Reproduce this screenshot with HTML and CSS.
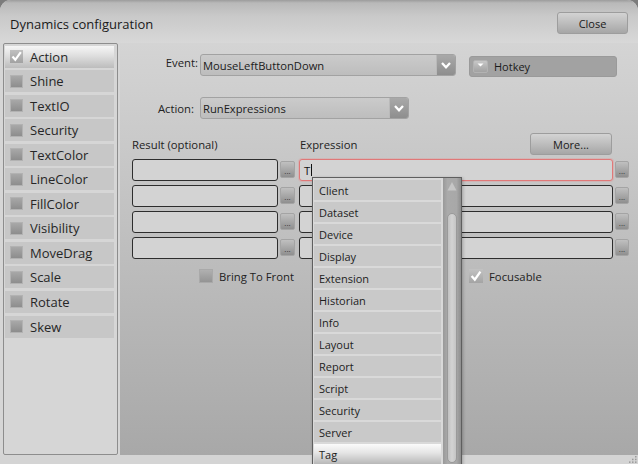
FILE: index.html
```html
<!DOCTYPE html>
<html lang="en">
<head>
<meta charset="utf-8">
<title>Dynamics configuration</title>
<link rel="stylesheet" href="styles.css">
</head>
<body>
<div class="window">
  <header class="titlebar">
    <span class="title">Dynamics configuration</span>
    <button class="btn close-btn">Close</button>
  </header>

  <div class="content">
    <nav class="sidebar">
      <div class="side-item selected"><span class="cb checked"><svg viewBox="0 0 13 13" width="13" height="13"><polyline points="2.5,6.5 5.3,9.8 10.8,2.2" fill="none" stroke="#fff" stroke-width="2.2"/></svg></span>Action</div>
      <div class="side-item"><span class="cb"></span>Shine</div>
      <div class="side-item"><span class="cb"></span>TextIO</div>
      <div class="side-item"><span class="cb"></span>Security</div>
      <div class="side-item"><span class="cb"></span>TextColor</div>
      <div class="side-item"><span class="cb"></span>LineColor</div>
      <div class="side-item"><span class="cb"></span>FillColor</div>
      <div class="side-item"><span class="cb"></span>Visibility</div>
      <div class="side-item"><span class="cb"></span>MoveDrag</div>
      <div class="side-item"><span class="cb"></span>Scale</div>
      <div class="side-item"><span class="cb"></span>Rotate</div>
      <div class="side-item"><span class="cb"></span>Skew</div>
    </nav>

    <main class="main">
      <div class="field-row">
        <label class="field-label event-label">Event:</label>
        <div class="combo event-combo">
          <span class="combo-text">MouseLeftButtonDown</span>
          <span class="combo-btn"><svg viewBox="0 0 10 7" width="10" height="7"><path d="M1 1 L5 5.3 L9 1" fill="none" stroke="#fff" stroke-width="2.3"/></svg></span>
        </div>
        <div class="hotkey">
          <span class="hotkey-icon"><svg viewBox="0 0 13 11" width="13" height="11"><polygon points="3.5,2.5 9.5,2.5 6.5,5.5" fill="#fff"/></svg></span>
          <span>Hotkey</span>
        </div>
      </div>

      <div class="field-row action-row">
        <label class="field-label action-label">Action:</label>
        <div class="combo action-combo">
          <span class="combo-text">RunExpressions</span>
          <span class="combo-btn"><svg viewBox="0 0 10 7" width="10" height="7"><path d="M1 1 L5 5.3 L9 1" fill="none" stroke="#fff" stroke-width="2.3"/></svg></span>
        </div>
      </div>

      <div class="labels-row">
        <span class="col-result">Result (optional)</span>
        <span class="col-expr">Expression</span>
        <button class="btn more-btn">More...</button>
      </div>

      <div class="boxes">
        <div class="box-row">
          <div class="tb result"></div>
          <button class="dots">...</button>
          <div class="tb expr focused">T<span class="caret"></span>
            <div class="popup">
              <div class="popup-list">
                <div class="popup-item">Client</div>
                <div class="popup-item">Dataset</div>
                <div class="popup-item">Device</div>
                <div class="popup-item">Display</div>
                <div class="popup-item">Extension</div>
                <div class="popup-item">Historian</div>
                <div class="popup-item">Info</div>
                <div class="popup-item">Layout</div>
                <div class="popup-item">Report</div>
                <div class="popup-item">Script</div>
                <div class="popup-item">Security</div>
                <div class="popup-item">Server</div>
                <div class="popup-item active">Tag</div>
              </div>
              <div class="scrollbar">
                <svg class="scroll-up" viewBox="0 0 10 10" width="10" height="10"><polygon points="5,1 9.5,9.5 0.5,9.5" fill="#c6c6c6"/></svg>
                <div class="thumb"></div>
              </div>
            </div>
          </div>
          <button class="dots narrow">...</button>
        </div>
        <div class="box-row">
          <div class="tb result"></div>
          <button class="dots">...</button>
          <div class="tb expr"></div>
          <button class="dots narrow">...</button>
        </div>
        <div class="box-row">
          <div class="tb result"></div>
          <button class="dots">...</button>
          <div class="tb expr"></div>
          <button class="dots narrow">...</button>
        </div>
        <div class="box-row">
          <div class="tb result"></div>
          <button class="dots">...</button>
          <div class="tb expr"></div>
          <button class="dots narrow">...</button>
        </div>
      </div>

      <div class="checks-row">
        <label class="check-item front"><span class="mcb"></span>Bring To Front</label>
        <label class="check-item"><span class="mcb checked"><svg viewBox="0 0 14 14" width="14" height="14"><polyline points="2.6,7 5.8,10.6 11.4,2.6" fill="none" stroke="#fff" stroke-width="2.3"/></svg></span>Focusable</label>
      </div>
    </main>
  </div>

  <footer class="statusbar">
    <svg class="grip" viewBox="0 0 9 7" width="9" height="7">
      <rect x="7" y="0" width="1.5" height="1.5" fill="#9a9a9a"/>
      <rect x="4" y="2.7" width="1.5" height="1.5" fill="#9a9a9a"/>
      <rect x="7" y="2.7" width="1.5" height="1.5" fill="#9a9a9a"/>
      <rect x="1" y="5.4" width="1.5" height="1.5" fill="#9a9a9a"/>
      <rect x="4" y="5.4" width="1.5" height="1.5" fill="#9a9a9a"/>
      <rect x="7" y="5.4" width="1.5" height="1.5" fill="#9a9a9a"/>
    </svg>
  </footer>
</div>
</body>
</html>
```

FILE: styles.css
```css
* { box-sizing: border-box; }

html, body {
  margin: 0;
  padding: 0;
}

body {
  width: 638px;
  height: 464px;
  overflow: hidden;
  background: #7c7c7c;
  font-family: "Open Sans", "Noto Sans", sans-serif;
  color: #1e1e1e;
}

.window {
  width: 638px;
  height: 464px;
  display: flex;
  flex-direction: column;
  border-radius: 11px 11px 0 0;
  overflow: hidden;
  background: #d6d6d6;
}

/* ---------- title bar ---------- */
.titlebar {
  height: 43px;
  flex: none;
  display: flex;
  align-items: center;
  justify-content: space-between;
  padding: 3px 10px 0 10px;
  background: linear-gradient(#9c9c9c 0px, #b9b9b9 3px, #c9c9c9 16px, #d8d8d8 43px);
}

.title {
  font-size: 13px;
  color: #1a1a1a;
  margin-top: 2px;
}

.btn {
  font-family: inherit;
  font-size: 11px;
  color: #1a1a1a;
  background: linear-gradient(#d3d3d3, #bdbdbd 50%, #a6a6a6);
  border: 1px solid #9d9d9d;
  border-radius: 3px;
  padding: 0;
  display: flex;
  align-items: center;
  justify-content: center;
}

.close-btn {
  width: 71px;
  height: 22px;
}

/* ---------- body ---------- */
.content {
  flex: 1;
  display: flex;
  min-height: 0;
}

.sidebar {
  width: 115px;
  flex: none;
  margin-left: 3px;
  margin-right: 2px;
  border: 1px solid #8d8d8d;
  border-radius: 2px;
  background: #d6d6d6;
  padding: 1.5px 3px 0 1px;
  display: flex;
  flex-direction: column;
  gap: 2.55px;
}

.side-item {
  height: 22px;
  flex: none;
  display: flex;
  align-items: center;
  gap: 7px;
  padding-left: 5px;
  background: #c7c7c7;
  font-size: 13px;
  color: #262626;
}

.side-item.selected {
  background: linear-gradient(#f6f6f6, #dedede 45%, #bcbcbc);
}

.cb {
  width: 13px;
  height: 13px;
  flex: none;
  background: linear-gradient(#a8a8a8, #8d8d8d);
  border: 1px solid #b2b2b2;
  display: flex;
}

.cb.checked {
  background: linear-gradient(#c0c0c0, #a2a2a2);
  border: none;
}

/* ---------- main panel ---------- */
.main {
  flex: 1;
  min-width: 0;
  position: relative;
  display: flex;
  flex-direction: column;
  padding: 11px 9px 0 12px;
  background: linear-gradient(#d4d4d4, #a8a8a8);
  font-size: 11.3px;
  color: #222;
}

.field-row {
  display: flex;
  align-items: center;
  height: 22px;
}

.action-row {
  margin-top: 21px;
}

.field-label {
  text-align: right;
  flex: none;
}

.event-label {
  width: 66px;
  margin-right: 2px;
  margin-bottom: 5px;
}

.action-label {
  width: 62px;
  margin-right: 6px;
}

.combo {
  height: 22px;
  display: flex;
  align-items: center;
  border: 1px solid #a2a2a2;
  border-radius: 3px;
  background: linear-gradient(#cbcbcb, #bdbdbd);
  padding-left: 2px;
  font-size: 11.2px;
  color: #1b1b1b;
}

.event-combo { width: 256px; }
.action-combo { width: 209px; }

.combo-text {
  flex: 1;
}

.combo-btn {
  width: 19px;
  height: 20px;
  display: flex;
  align-items: center;
  justify-content: center;
  background: linear-gradient(#a9a9a9, #8e8e8e);
  border-left: 1px solid #b9b9b9;
  border-radius: 0 2px 2px 0;
}

.hotkey {
  width: 148px;
  height: 21px;
  margin-left: 13px;
  align-self: flex-start;
  margin-top: 2px;
  display: flex;
  align-items: center;
  gap: 6px;
  padding-left: 3px;
  background: #a2a2a2;
  border: 1px solid #9a9a9a;
  border-radius: 3px;
  font-size: 11px;
  color: #1a1a1a;
}

.hotkey-icon {
  width: 15px;
  height: 13px;
  display: flex;
  align-items: flex-start;
  justify-content: center;
  background: linear-gradient(#c7c7c7, #a2a2a2);
  border: 1px solid #b3b3b3;
  border-radius: 2px;
}

.labels-row {
  display: flex;
  align-items: center;
  height: 22px;
  margin-top: 14px;
}

.col-result {
  width: 168px;
  flex: none;
}

.col-expr {
  flex: 1;
}

.more-btn {
  width: 82px;
  height: 22px;
  flex: none;
  margin-right: 17px;
}

.boxes {
  margin-top: 4px;
  display: flex;
  flex-direction: column;
  gap: 4px;
}

.box-row {
  display: flex;
  align-items: center;
  height: 22px;
}

.tb {
  height: 22px;
  flex: none;
  border: 1px solid #2d2d2d;
  border-radius: 3px;
  background: #d3d3d3;
}

.tb.result { width: 146px; }

.tb.expr {
  width: 314px;
  margin-left: 4px;
  position: relative;
  display: flex;
  align-items: center;
  padding-left: 4px;
  color: #111;
}

.tb.focused {
  border-color: #e07878;
  box-shadow: 0 0 0 1px rgba(230, 150, 150, 0.35);
}

.caret {
  display: inline-block;
  width: 1px;
  height: 12px;
  margin-left: 1px;
  background: #111;
}

.dots {
  width: 15px;
  height: 17px;
  flex: none;
  margin-left: 2px;
  margin-bottom: 1px;
  padding: 0 0 2px 0;
  border: 1px solid #a4a4a4;
  border-radius: 2px;
  background: linear-gradient(#c0c0c0, #8f8f8f);
  font-family: inherit;
  font-size: 8px;
  line-height: 1;
  color: #333;
  display: flex;
  align-items: flex-end;
  justify-content: center;
}

.dots.narrow { width: 14px; }

/* ---------- autocomplete popup ---------- */
.popup {
  position: absolute;
  left: 12px;
  top: 17px;
  width: 150px;
  height: 300px;
  z-index: 5;
  display: flex;
  border: 1px solid #5f5f5f;
  background: #d9d9d9;
  box-shadow: 1px 1px 3px rgba(0, 0, 0, 0.25);
}

.popup-list {
  width: 128px;
  padding: 2px 0 0 1px;
  margin-right: 2px;
  display: flex;
  flex-direction: column;
  gap: 2px;
}

.popup-item {
  height: 20px;
  flex: none;
  display: flex;
  align-items: center;
  padding-left: 5px;
  background: #c9c9c9;
  font-size: 11px;
  color: #1d1d1d;
}

.popup-item.active {
  background: linear-gradient(#fbfbfb, #e4e4e4 45%, #b8b8b8);
}

.scrollbar {
  width: 18px;
  display: flex;
  flex-direction: column;
  align-items: center;
  background: linear-gradient(90deg, #999999, #aaaaaa 25%, #a8a8a8 75%, #8e8e8e);
}

.scroll-up {
  margin-top: 3px;
  flex: none;
}

.thumb {
  width: 10px;
  height: 250px;
  margin-top: 22px;
  border: 1px solid #9a9a9a;
  border-radius: 5px;
  background: linear-gradient(90deg, #c2c2c2, #d3d3d3 50%, #c4c4c4);
}

/* ---------- checkbox row ---------- */
.checks-row {
  display: flex;
  align-items: center;
  height: 16px;
  margin-top: 9px;
  padding-left: 67px;
}

.check-item {
  display: flex;
  align-items: center;
  gap: 6px;
  font-size: 11.3px;
  color: #222;
}

.check-item.front {
  width: 270px;
  flex: none;
}

.mcb {
  width: 14px;
  height: 14px;
  flex: none;
  display: flex;
  background: linear-gradient(#b0b0b0, #949494);
  border: 1px solid #a9a9a9;
}

.mcb.checked {
  background: linear-gradient(#c2c2c2, #a4a4a4);
  border: none;
}

/* ---------- status bar ---------- */
.statusbar {
  height: 9px;
  flex: none;
  display: flex;
  justify-content: flex-end;
  align-items: flex-end;
  padding: 0 1px 1px 0;
  background: #d4d4d4;
}
```
